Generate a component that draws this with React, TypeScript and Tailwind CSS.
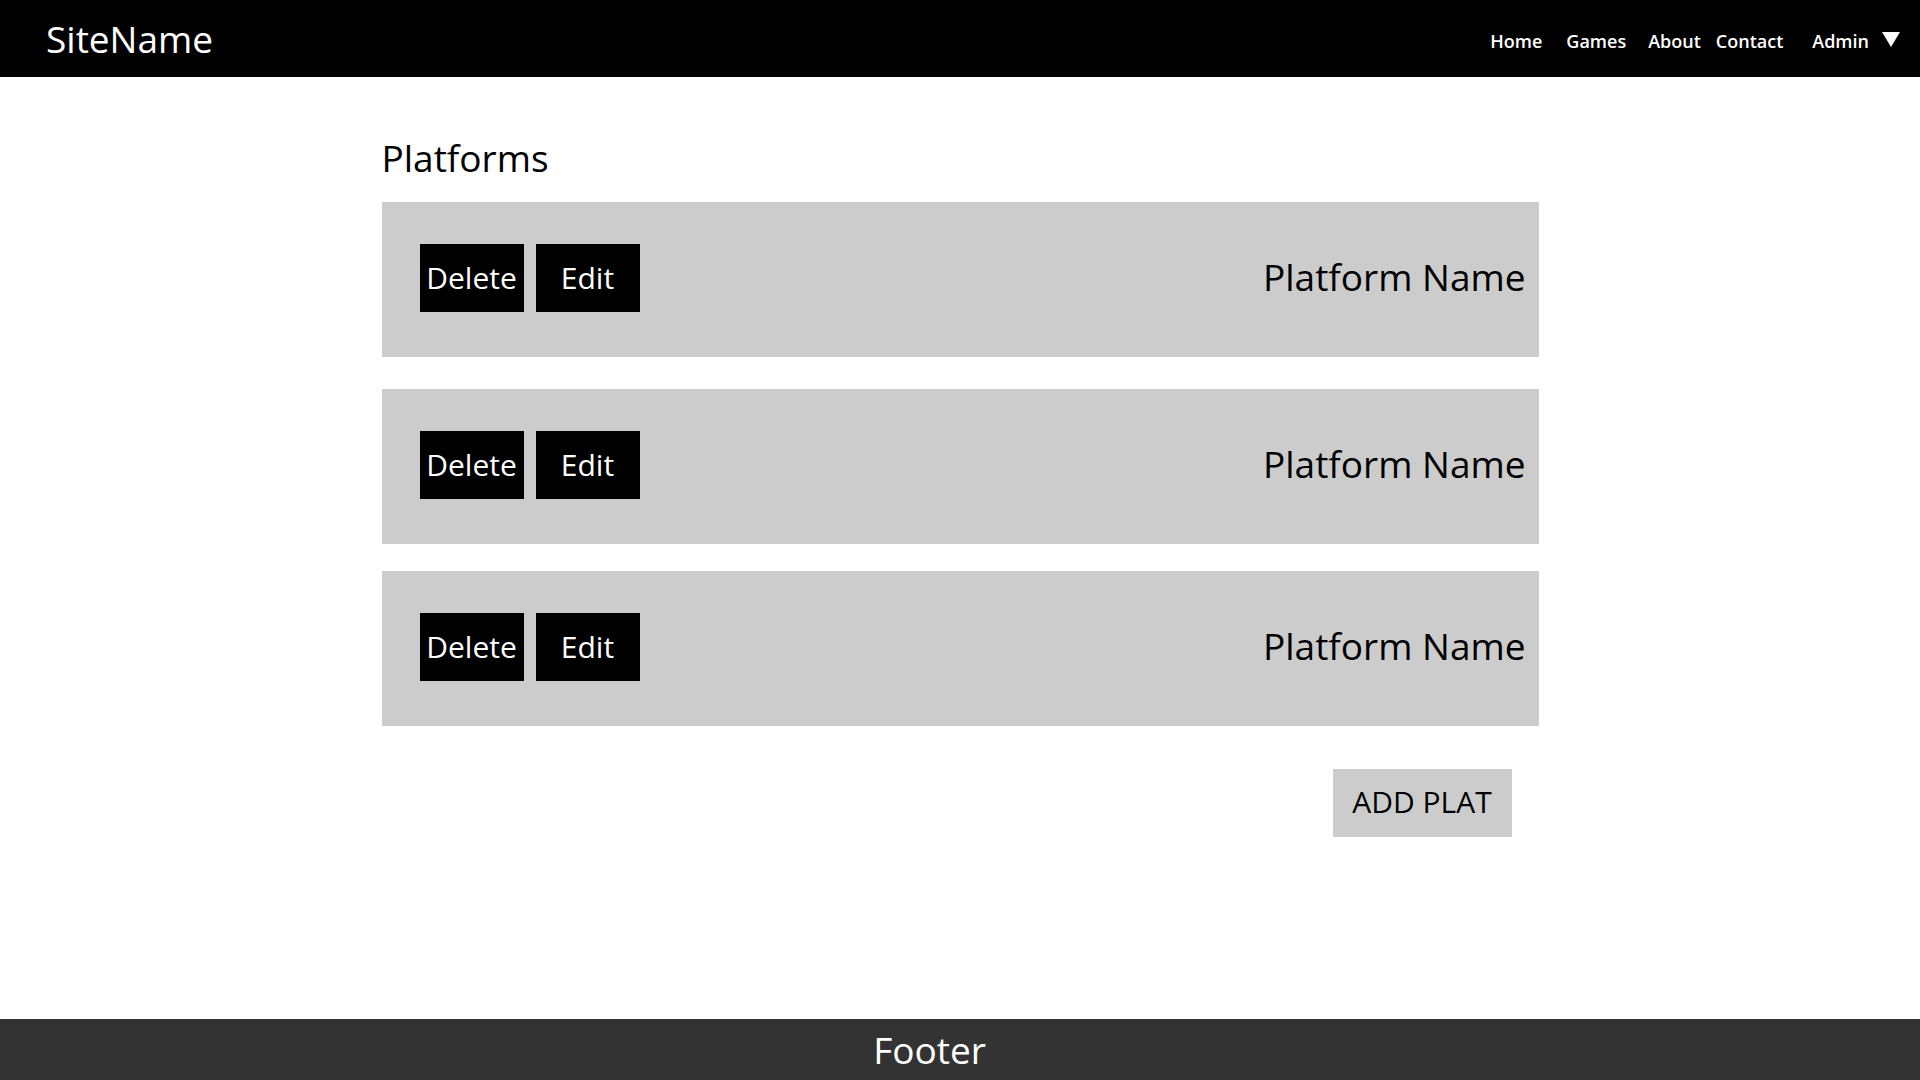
const font = { fontFamily: '"Open Sans", "Noto Sans", sans-serif' };

function Header() {
  return (
    <header className="h-[77px] bg-black text-white flex items-center">
      <a className="pl-[46px] text-[37px] leading-none">SiteName</a>
      <nav className="ml-auto flex items-center text-[18px] font-semibold leading-none pr-[20px] pt-[4px]">
        <a className="mr-[24px]">Home</a>
        <a className="mr-[22px]">Games</a>
        <a className="mr-[15px]">About</a>
        <a className="mr-[29px]">Contact</a>
        <a className="mr-[13px]">Admin</a>
        <svg width="18" height="15" viewBox="0 0 18 15" className="-mt-[3px]">
          <polygon points="0,0 18,0 9,15" fill="white" />
        </svg>
      </nav>
    </header>
  );
}

function PlatformRow() {
  return (
    <div className="h-[155px] bg-[#cccccc] flex items-center pl-[38px] pr-[13px] pb-[3px]">
      <div className="flex gap-[12px]">
        <button className="w-[104px] h-[68px] bg-black text-white text-[30px] leading-none flex items-center justify-center">
          Delete
        </button>
        <button className="w-[104px] h-[68px] bg-black text-white text-[30px] leading-none flex items-center justify-center">
          Edit
        </button>
      </div>
      <span className="ml-auto text-[37px] leading-none text-black pb-[3px]">Platform Name</span>
    </div>
  );
}

export default function App() {
  return (
    <div className="min-h-screen flex flex-col bg-white" style={font}>
      <Header />
      <main className="flex-1">
        <div className="w-[1157px] mx-auto flex flex-col">
          <h1 className="mt-[62px] mb-[26px] text-[37px] leading-[37px] text-black">Platforms</h1>
          <PlatformRow />
          <div className="mt-[32px]">
            <PlatformRow />
          </div>
          <div className="mt-[27px]">
            <PlatformRow />
          </div>
          <button className="self-end mr-[27px] mt-[43px] w-[179px] h-[68px] bg-[#cccccc] text-black text-[30px] leading-none flex items-center justify-center pb-[2px]">
            ADD PLAT
          </button>
        </div>
      </main>
      <footer className="h-[61px] bg-[#333333] text-white flex items-center justify-center pr-[61px] text-[37px] leading-none">
        Footer
      </footer>
    </div>
  );
}
